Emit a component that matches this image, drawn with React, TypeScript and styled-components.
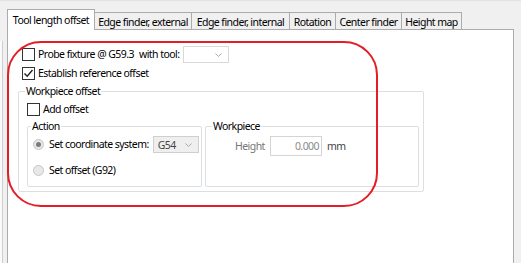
import React from "react";
import styled, { createGlobalStyle } from "styled-components";

const GlobalStyle = createGlobalStyle`
  html, body {
    margin: 0;
    padding: 0;
    background: #f0f0f0;
    font-family: "Segoe UI", "Noto Sans", sans-serif;
    font-size: 10.5px;
    letter-spacing: -0.55px;
    color: #000;
  }
  #root {
    height: 263px;
    overflow: hidden;
  }
`;

const tabs = [
  { label: "Tool length offset", width: 88 },
  { label: "Edge finder, external", width: 98 },
  { label: "Edge finder, internal", width: 99 },
  { label: "Rotation", width: 47 },
  { label: "Center finder", width: 67 },
  { label: "Height map", width: 61 },
];

function Chevron() {
  return (
    <svg width="7" height="4" viewBox="0 0 7 4">
      <path d="M0.5 0.5 L3.5 3.5 L6.5 0.5" fill="none" stroke="#a8a8a8" strokeWidth="1" />
    </svg>
  );
}

function Check() {
  return (
    <svg width="11" height="11" viewBox="0 0 11 11">
      <path d="M1.5 5.5 L4.2 8.3 L9.5 2" fill="none" stroke="#222" strokeWidth="1.4" />
    </svg>
  );
}

export default function App() {
  return (
    <>
      <GlobalStyle />
      <Screen>
        <LeftEdge />
        <TabControl>
          <TabRow>
            {tabs.map((t, i) => (
              <Tab key={t.label} $width={t.width} $active={i === 0}>
                {t.label}
              </Tab>
            ))}
          </TabRow>
          <Panel>
            <Row>
              <CheckBox />
              <Label>Probe fixture @ G59.3</Label>
              <Label style={{ marginLeft: 5 }}>with tool:</Label>
              <Combo $width={46} $disabled={false}>
                <span />
                <Chevron />
              </Combo>
            </Row>
            <Row $top={2}>
              <CheckBox>
                <Check />
              </CheckBox>
              <Label>Establish reference offset</Label>
            </Row>
            <Group $width={406} $height={108} $top={2}>
              <Legend>Workpiece offset</Legend>
              <InnerRow>
                <CheckBox />
                <Label>Add offset</Label>
              </InnerRow>
              <GroupPair>
                <Group $width={175} $height={68} $top={0}>
                  <Legend>Action</Legend>
                  <RadioRow $top={3}>
                    <Radio $checked />
                    <Label>Set coordinate system:</Label>
                    <Combo $width={46} $disabled>
                      <span>G54</span>
                      <Chevron />
                    </Combo>
                  </RadioRow>
                  <RadioRow $top={9}>
                    <Radio />
                    <Label>Set offset (G92)</Label>
                  </RadioRow>
                </Group>
                <Group $width={214} $height={68} $top={0}>
                  <Legend>Workpiece</Legend>
                  <HeightRow>
                    <DimLabel>Height</DimLabel>
                    <NumberBox>0.000</NumberBox>
                    <Unit>mm</Unit>
                  </HeightRow>
                </Group>
              </GroupPair>
            </Group>
          </Panel>
        </TabControl>
        <Highlight />
      </Screen>
    </>
  );
}

const Screen = styled.div`
  position: relative;
  display: flex;
  height: 263px;
  border-top: 1px solid #e2e2e2;
  box-sizing: border-box;
  padding-right: 7px;
`;

const LeftEdge = styled.div`
  width: 7px;
  flex: none;
  box-sizing: border-box;
  margin-top: 40px;
  border-left: 2px solid #fafafa;
  border-right: 4px solid #f0f0f0;
  background: #cfcfcf;
`;

const TabControl = styled.div`
  flex: 1;
  display: flex;
  flex-direction: column;
  padding-top: 8px;
`;

const TabRow = styled.div`
  display: flex;
  align-items: flex-end;
  height: 21px;
  margin-bottom: -1px;
`;

const Tab = styled.div<{ $width: number; $active: boolean }>`
  width: ${(p) => p.$width}px;
  height: ${(p) => (p.$active ? 21 : 18)}px;
  box-sizing: border-box;
  border: 1px solid #acacac;
  border-bottom: none;
  margin-left: -1px;
  background: ${(p) => (p.$active ? "#fff" : "#f0f0f0")};
  position: ${(p) => (p.$active ? "relative" : "static")};
  z-index: ${(p) => (p.$active ? 2 : "auto")};
  display: flex;
  align-items: center;
  justify-content: center;
  padding-bottom: ${(p) => (p.$active ? 1 : 0)}px;
  white-space: nowrap;
  overflow: hidden;
  &:first-child {
    margin-left: 0;
  }
`;

const Panel = styled.div`
  flex: 1;
  background: #fff;
  border: 1px solid #acacac;
  border-bottom: none;
  position: relative;
  z-index: 1;
  padding: 16px 0 0 10px;
  display: flex;
  flex-direction: column;
  align-items: flex-start;
`;

const Row = styled.div<{ $top?: number }>`
  display: flex;
  align-items: center;
  height: 17px;
  padding-left: 4px;
  margin-top: ${(p) => p.$top ?? 0}px;
`;

const InnerRow = styled.div`
  display: flex;
  align-items: center;
  height: 14px;
  margin-top: 4px;
`;

const CheckBox = styled.div`
  width: 13px;
  height: 13px;
  box-sizing: border-box;
  border: 1px solid #333;
  background: #fff;
  display: flex;
  align-items: center;
  justify-content: center;
  margin-right: 3px;
  flex: none;
`;

const Label = styled.span`
  white-space: nowrap;
  line-height: 15px;
`;

const Combo = styled.div<{ $width: number; $disabled: boolean }>`
  width: ${(p) => p.$width}px;
  height: 17px;
  box-sizing: border-box;
  border: 1px solid ${(p) => (p.$disabled ? "#cfcfcf" : "#d9d9d9")};
  background: ${(p) => (p.$disabled ? "#efefef" : "#fff")};
  margin-left: 4px;
  display: flex;
  align-items: center;
  justify-content: space-between;
  padding: 0 6px 0 4px;
  color: #444;
`;

const Group = styled.fieldset<{ $width: number; $height: number; $top: number }>`
  width: ${(p) => p.$width}px;
  height: ${(p) => p.$height}px;
  box-sizing: border-box;
  margin: ${(p) => p.$top}px 0 0 0;
  padding: 0 5px 3px 8px;
  border: 1px solid #dcdfe2;
  border-radius: 2px;
  min-width: 0;
  display: flex;
  flex-direction: column;
  align-items: flex-start;
`;

const Legend = styled.legend`
  padding: 0 1px;
  margin-left: -2px;
  line-height: 14px;
  white-space: nowrap;
`;

const GroupPair = styled.div`
  display: flex;
  gap: 3px;
  margin-top: 3px;
  & > fieldset:first-child {
    padding-left: 5px;
  }
`;

const RadioRow = styled.div<{ $top: number }>`
  display: flex;
  align-items: center;
  height: 17px;
  margin-top: ${(p) => p.$top}px;
`;

const Radio = styled.div<{ $checked?: boolean }>`
  width: 11px;
  height: 11px;
  box-sizing: border-box;
  border-radius: 50%;
  border: 1px solid #c6c6c6;
  background: #e8e8e8;
  margin-right: 5px;
  display: flex;
  align-items: center;
  justify-content: center;
  flex: none;
  &::after {
    content: "";
    display: ${(p) => (p.$checked ? "block" : "none")};
    width: 5px;
    height: 5px;
    border-radius: 50%;
    background: #7b7b7b;
  }
`;

const HeightRow = styled.div`
  display: flex;
  align-items: center;
  height: 20px;
  margin-top: 3px;
  padding-left: 21px;
`;

const DimLabel = styled.span`
  color: #777;
  width: 35px;
  white-space: nowrap;
`;

const NumberBox = styled.div`
  width: 52px;
  height: 20px;
  box-sizing: border-box;
  border: 1px solid #d4d4d4;
  background: #fff;
  color: #8a8a8a;
  text-align: right;
  padding-right: 2px;
  line-height: 18px;
`;

const Unit = styled.span`
  color: #444;
  margin-left: 5px;
`;

const Highlight = styled.div`
  position: absolute;
  left: 7px;
  top: 40px;
  width: 371px;
  height: 166px;
  box-sizing: border-box;
  border: 2px solid #e41e26;
  border-radius: 34px;
  pointer-events: none;
  z-index: 5;
`;
